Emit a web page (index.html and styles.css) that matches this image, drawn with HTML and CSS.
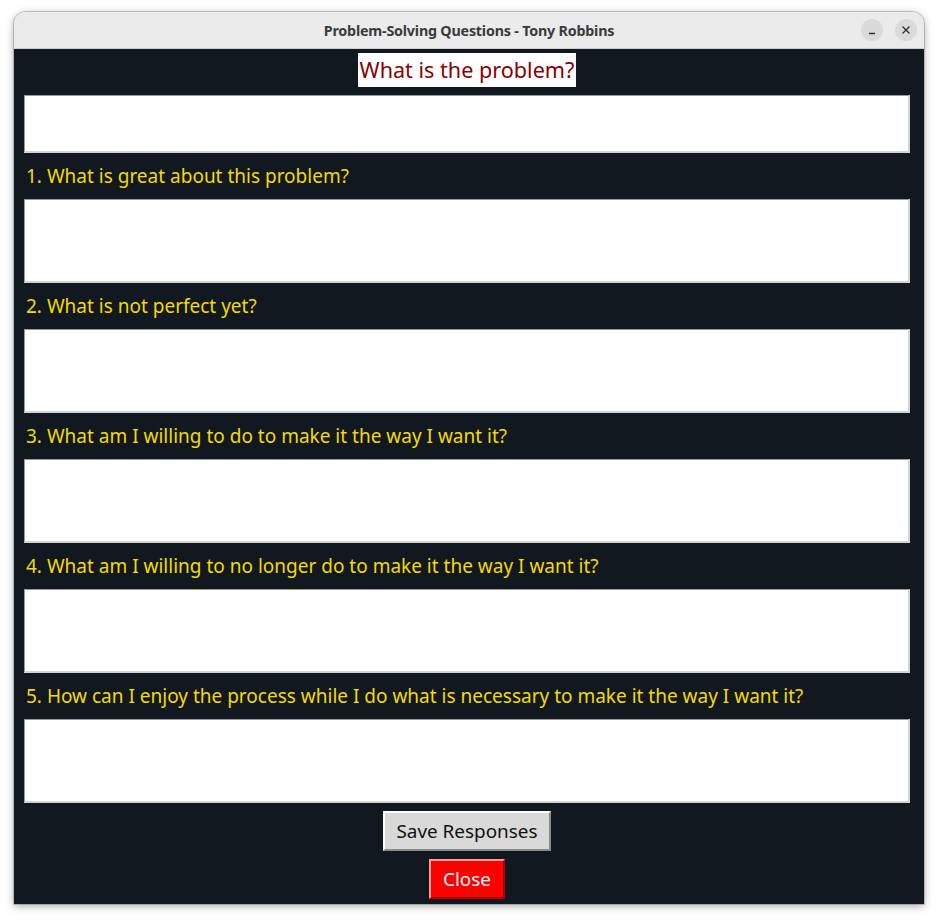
FILE: index.html
```html
<!DOCTYPE html>
<html>
<head>
<meta charset="utf-8">
<link rel="stylesheet" href="styles.css">
</head>
<body>
<div class="desk">
  <div class="window">
    <div class="titlebar">
      <div class="title">Problem-Solving Questions - Tony Robbins</div>
      <div class="wbtns">
        <span class="wbtn"><svg width="10" height="10" viewBox="0 0 10 10"><path d="M2 8.5h6" stroke="#2e2e2e" stroke-width="1.3"/></svg></span>
        <span class="wbtn"><svg width="10" height="10" viewBox="0 0 10 10"><path d="M1.5 1.5l7 7M8.5 1.5l-7 7" stroke="#2e2e2e" stroke-width="1.3"/></svg></span>
      </div>
    </div>
    <div class="content">
      <div class="heading">What is the problem?</div>
      <div class="entry"></div>
      <div class="label">1. What is great about this problem?</div>
      <div class="text"></div>
      <div class="label">2. What is not perfect yet?</div>
      <div class="text"></div>
      <div class="label">3. What am I willing to do to make it the way I want it?</div>
      <div class="text"></div>
      <div class="label">4. What am I willing to no longer do to make it the way I want it?</div>
      <div class="text"></div>
      <div class="label">5. How can I enjoy the process while I do what is necessary to make it the way I want it?</div>
      <div class="text"></div>
      <button class="btn save">Save Responses</button>
      <button class="btn close">Close</button>
    </div>
  </div>
</div>
</body>
</html>
```
FILE: styles.css
```css
html, body {
  margin: 0;
  padding: 0;
  background: #ffffff;
}
.desk {
  padding: 12px 0 0 14px;
  width: 938px;
  height: 921px;
  box-sizing: border-box;
}
.window {
  width: 910px;
  height: 892px;
  border-radius: 12px 12px 0 0;
  box-shadow: 0 2px 8px rgba(0,0,0,0.35), 0 0 0 1px rgba(0,0,0,0.18);
  display: flex;
  flex-direction: column;
  overflow: hidden;
}
.titlebar {
  height: 36px;
  background: #ebebeb;
  border-bottom: 1px solid #cfcfcf;
  position: relative;
  display: flex;
  align-items: center;
  justify-content: center;
  flex: none;
}
.title {
  font-family: "Noto Sans", sans-serif;
  font-weight: 700;
  font-size: 14.3px;
  color: #3a3a3a;
  letter-spacing: -0.2px;
}
.wbtns {
  position: absolute;
  right: 7px;
  top: 7px;
  display: flex;
  gap: 12px;
}
.wbtn {
  width: 22px;
  height: 22px;
  border-radius: 50%;
  background: #dadada;
  display: flex;
  align-items: center;
  justify-content: center;
}
.content {
  flex: 1;
  background: #111820;
  padding: 4px 14px 0 10px;
  display: flex;
  flex-direction: column;
  align-items: center;
  font-family: "Noto Sans", sans-serif;
}
.heading {
  background: #ffffff;
  color: #8b0000;
  font-size: 21.6px;
  height: 34px;
  line-height: 34px;
  padding: 0 2px;
}
.entry, .text {
  align-self: stretch;
  background: #ffffff;
  border-top: 1px solid #9a9a9a;
  border-left: 1px solid #9a9a9a;
  border-bottom: 2px solid #d4d4d4;
  border-right: 2px solid #d4d4d4;
  box-sizing: border-box;
}
.entry {
  height: 58px;
  margin-top: 8px;
}
.text {
  height: 84px;
}
.label {
  align-self: stretch;
  color: #f5da00;
  font-size: 19px;
  height: 46px;
  line-height: 46px;
  padding-left: 2px;
  white-space: nowrap;
}
.btn {
  font-family: "Noto Sans", sans-serif;
  font-size: 18.9px;
  height: 40px;
  margin-top: 8px;
  box-sizing: border-box;
  padding: 0;
  border-style: solid;
  border-width: 2px;
}
.save {
  width: 168px;
  background: #d9d9d9;
  color: #111111;
  border-color: #ffffff #8a8a8a #8a8a8a #ffffff;
}
.close {
  width: 76px;
  background: #ff0000;
  color: #ffffff;
  border-color: #ff9a9a #b30000 #b30000 #ff9a9a;
}
```
